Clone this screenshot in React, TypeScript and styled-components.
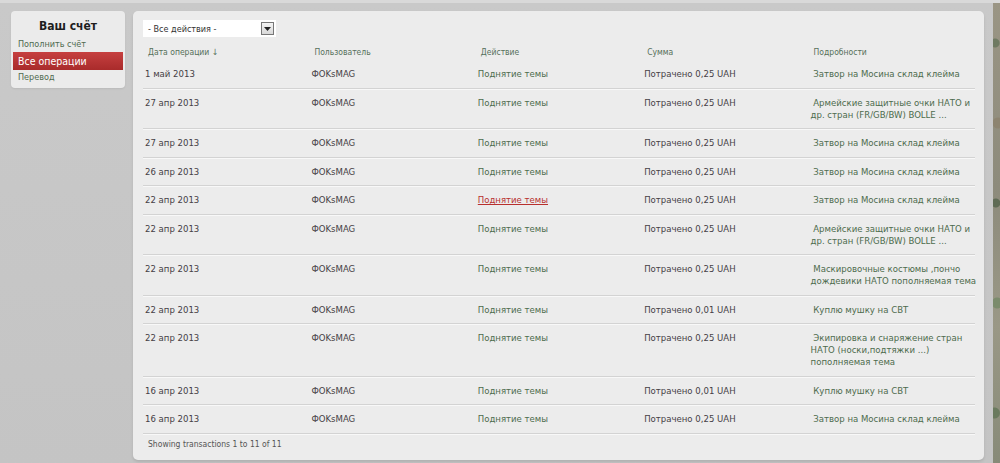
import React from "react";
import styled, { createGlobalStyle } from "styled-components";

const GlobalStyle = createGlobalStyle`
  html, body {
    margin: 0;
    padding: 0;
  }
  body {
    background: #c8c8c8;
    font-family: "DejaVu Sans Condensed", "DejaVu Sans", Verdana, sans-serif;
    font-stretch: condensed;
  }
`;

const Page = styled.div`
  display: flex;
  min-height: 463px;
  border-top: 3px solid #d9d9d9;
  box-sizing: border-box;
  background: linear-gradient(#c9c9c9, #c4c4c4);
`;

const Content = styled.div`
  flex: 1;
  display: flex;
  align-items: flex-start;
  gap: 8px;
  padding: 8px 9px 5px 11px;
`;

const Camo = styled.div`
  width: 7px;
  background-repeat: no-repeat;
  background-image:
    radial-gradient(circle at 30% 40px, #6f7a62 0 4px, transparent 5px),
    radial-gradient(circle at 70% 120px, #8d8470 0 5px, transparent 6px),
    radial-gradient(circle at 40% 200px, #5f6b55 0 4px, transparent 5px),
    radial-gradient(circle at 60% 300px, #7b8b6c 0 5px, transparent 6px),
    radial-gradient(circle at 20% 410px, #6a7a5e 0 5px, transparent 6px),
    linear-gradient(#9a9584, #8d8b7c 40%, #9a9886 70%, #878a78);
`;

const Sidebar = styled.div`
  width: 114px;
  background: #ebebeb;
  border-radius: 4px;
  padding: 8px 2px 3px;
  box-sizing: border-box;
  box-shadow: 0 1px 2px rgba(0, 0, 0, 0.08);
`;

const SideTitle = styled.div`
  font-weight: bold;
  font-size: 12px;
  line-height: 15px;
  color: #1e1e1e;
  text-align: center;
  margin-bottom: 3px;
`;

const SideLink = styled.div<{ $active?: boolean }>`
  font-size: ${(p) => (p.$active ? "10.5px" : "9px")};
  line-height: ${(p) => (p.$active ? "18px" : "15px")};
  padding: 0 5px;
  color: ${(p) => (p.$active ? "#ffffff" : "#4f6a4f")};
  background: ${(p) =>
    p.$active ? "linear-gradient(#c64040, #a92b2b)" : "transparent"};
`;

const Main = styled.div`
  flex: 1;
  background: #ececec;
  border-radius: 5px;
  padding: 9px 9px 11px 10px;
  box-shadow: 0 2px 3px rgba(0, 0, 0, 0.1);
`;

const Select = styled.div`
  width: 133px;
  height: 17px;
  background: #ffffff;
  display: flex;
  align-items: center;
  justify-content: space-between;
  padding: 0 2px 0 5px;
  box-sizing: border-box;
  font-size: 9px;
  color: #333;
  margin-bottom: 6px;
`;

const Arrow = styled.span`
  width: 11px;
  height: 11px;
  border: 1px solid #777;
  background: linear-gradient(#f4f4f4, #d8d8d8);
  display: flex;
  align-items: center;
  justify-content: center;
`;

const Table = styled.table`
  width: 100%;
  table-layout: fixed;
  border-collapse: separate;
  border-spacing: 0;
`;

const Th = styled.th`
  text-align: left;
  font-weight: normal;
  font-size: 8.5px;
  color: #56705a;
  padding: 4px 4px 3px 5px;
`;

const Td = styled.td<{ $tone: "dark" | "green" | "hover" }>`
  vertical-align: top;
  font-size: 9.5px;
  line-height: 12px;
  white-space: nowrap;
  padding: 8px 2px 7.5px 2px;
  border-bottom: 1px solid #d3d3d3;
  box-shadow: 0 1px 0 #f8f8f8;
  color: ${(p) =>
    p.$tone === "dark" ? "#454045" : p.$tone === "hover" ? "#b8302e" : "#4c6b4c"};
  text-decoration: ${(p) => (p.$tone === "hover" ? "underline" : "none")};
`;

const Footer = styled.div`
  font-size: 8.5px;
  color: #555;
  padding: 5px 5px 0;
`;

type Row = { date: string; sum: string; details: string[]; hover?: boolean };

const zatvor = ["\u00a0Затвор на Мосина склад клейма"];
const ochki = ["\u00a0Армейские защитные очки НАТО и", "др. стран (FR/GB/BW) BOLLE ..."];
const svt = ["\u00a0Куплю мушку на СВТ"];

const rows: Row[] = [
  { date: "1 май 2013", sum: "Потрачено 0,25 UAH", details: zatvor },
  { date: "27 апр 2013", sum: "Потрачено 0,25 UAH", details: ochki },
  { date: "27 апр 2013", sum: "Потрачено 0,25 UAH", details: zatvor },
  { date: "26 апр 2013", sum: "Потрачено 0,25 UAH", details: zatvor },
  { date: "22 апр 2013", sum: "Потрачено 0,25 UAH", details: zatvor, hover: true },
  { date: "22 апр 2013", sum: "Потрачено 0,25 UAH", details: ochki },
  {
    date: "22 апр 2013",
    sum: "Потрачено 0,25 UAH",
    details: ["\u00a0Маскировочные костюмы ,пончо", "дождевики НАТО пополняемая тема"],
  },
  { date: "22 апр 2013", sum: "Потрачено 0,01 UAH", details: svt },
  {
    date: "22 апр 2013",
    sum: "Потрачено 0,25 UAH",
    details: [
      "\u00a0Экипировка и снаряжение стран",
      "НАТО (носки,подтяжки ...)",
      "пополняемая тема",
    ],
  },
  { date: "16 апр 2013", sum: "Потрачено 0,01 UAH", details: svt },
  { date: "16 апр 2013", sum: "Потрачено 0,25 UAH", details: zatvor },
];

export default function App(): React.ReactElement {
  return (
    <>
      <GlobalStyle />
      <Page>
        <Content>
          <Sidebar>
            <SideTitle>Ваш счёт</SideTitle>
            <SideLink>Пополнить счёт</SideLink>
            <SideLink $active>Все операции</SideLink>
            <SideLink>Перевод</SideLink>
          </Sidebar>
          <Main>
            <Select>
              <span>- Все действия -</span>
              <Arrow>
                <svg width="7" height="4" viewBox="0 0 7 4">
                  <path d="M0 0h7L3.5 4z" fill="#222" />
                </svg>
              </Arrow>
            </Select>
            <Table>
              <thead>
                <tr>
                  <Th>Дата операции ↓</Th>
                  <Th>Пользователь</Th>
                  <Th>Действие</Th>
                  <Th>Сумма</Th>
                  <Th>Подробности</Th>
                </tr>
              </thead>
              <tbody>
                {rows.map((r, i) => (
                  <tr key={i}>
                    <Td $tone="dark">{r.date}</Td>
                    <Td $tone="dark">ФOKsMAG</Td>
                    <Td $tone={r.hover ? "hover" : "green"}>Поднятие темы</Td>
                    <Td $tone="dark">{r.sum}</Td>
                    <Td $tone="green">
                      {r.details.map((line, j) => (
                        <div key={j}>{line}</div>
                      ))}
                    </Td>
                  </tr>
                ))}
              </tbody>
            </Table>
            <Footer>Showing transactions 1 to 11 of 11</Footer>
          </Main>
        </Content>
        <Camo />
      </Page>
    </>
  );
}
